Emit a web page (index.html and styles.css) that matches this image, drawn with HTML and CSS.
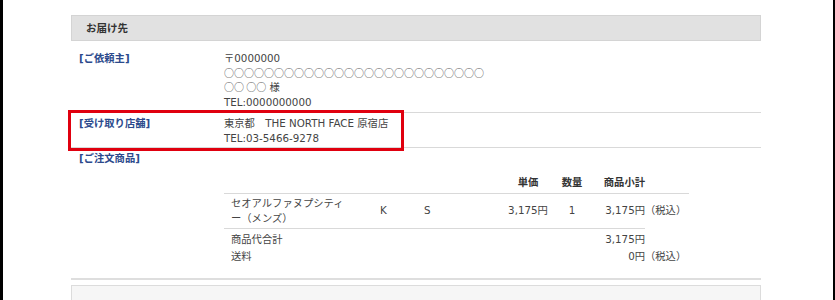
FILE: index.html
```html
<!DOCTYPE html>
<html lang="ja">
<head>
<meta charset="utf-8">
<title>お届け先</title>
<link rel="stylesheet" href="styles.css">
</head>
<body>
<div class="page">
  <div class="content">
    <div class="box-head">お届け先</div>

    <div class="row row-first">
      <div class="label">[ご依頼主]</div>
      <div class="value">
        <div>〒0000000</div>
        <div class="cjk circles">○○○○○○○○○○○○○○○○○○○○○○○○○○</div>
        <div><span class="cjk circles">○○ ○○</span> 様</div>
        <div>TEL:0000000000</div>
      </div>
    </div>

    <div class="row row-line row-shop">
      <div class="label">[受け取り店舗]</div>
      <div class="value">
        <div>東京都　THE NORTH FACE 原宿店</div>
        <div>TEL:03-5466-9278</div>
      </div>
      <div class="highlight"></div>
    </div>

    <div class="row-order row-line">
      <div class="label">[ご注文商品]</div>
      <table class="items">
        <colgroup>
          <col class="c-name"><col class="c-color"><col class="c-size"><col class="c-price"><col class="c-qty"><col class="c-sub"><col class="c-tax">
        </colgroup>
        <thead>
          <tr>
            <th></th><th></th><th></th>
            <th class="center">単価</th>
            <th class="center">数量</th>
            <th class="right">商品小計</th>
            <th></th>
          </tr>
        </thead>
        <tbody>
          <tr class="item">
            <td class="name">セオアルファヌプシティー（メンズ）</td>
            <td class="opt">K</td>
            <td class="opt">S</td>
            <td class="center">3,175円</td>
            <td class="center">1</td>
            <td class="right">3,175円</td>
            <td class="tax">（税込）</td>
          </tr>
          <tr class="sum first">
            <td class="name" colspan="3">商品代合計</td>
            <td colspan="3" class="right">3,175円</td>
            <td class="tax"></td>
          </tr>
          <tr class="sum">
            <td class="name" colspan="3">送料</td>
            <td colspan="3" class="right">0円</td>
            <td class="tax">（税込）</td>
          </tr>
        </tbody>
      </table>
    </div>

    <div class="box-head box-next">お支払い方法</div>
  </div>
</div>
</body>
</html>
```

FILE: styles.css
```css
html, body {
  margin: 0;
  padding: 0;
  background: #fff;
}
body {
  font-family: "DejaVu Sans", "Noto Sans CJK JP", sans-serif;
  font-size: 10.3px;
  line-height: 14.7px;
  color: #444;
}
.page {
  height: 300px;
  overflow: hidden;
  border-left: 3px solid #000;
  border-right: 2px solid #000;
  box-sizing: border-box;
}
.content {
  margin: 15px 0 0 68px;
  width: 690px;
}
.cjk {
  font-family: "Noto Sans CJK JP", sans-serif;
}
.circles {
  color: #555;
  font-size: 10px;
}
.box-head {
  height: 24px;
  line-height: 24px;
  background: #e1e1e1;
  border: 1px solid #d4d4d4;
  padding-left: 14px;
  font-weight: bold;
  color: #333;
  font-size: 10.5px;
}
.row {
  position: relative;
  display: grid;
  grid-template-columns: 153px 1fr;
}
.row-first {
  margin-top: 10px;
  padding: 0 0 2px;
}
.row-line {
  border-top: 1px solid #d9d9d9;
}
.row-shop {
  padding: 3px 0 2px;
}
.label {
  padding-left: 8px;
  font-weight: bold;
  color: #2c4a8c;
}
.highlight {
  position: absolute;
  left: -3px;
  top: -3px;
  width: 330px;
  height: 35px;
  border: 3px solid #e0000f;
}
.row-order {
  padding: 3px 0 14px;
  border-bottom: 2px solid #dedede;
}
.items {
  margin: 5px 0 0 153px;
  width: 465px;
  border-collapse: collapse;
  table-layout: fixed;
}
.c-name { width: 148px; }
.c-color { width: 44px; }
.c-size { width: 80px; }
.c-price { width: 64px; }
.c-qty { width: 24px; }
.c-sub { width: 61px; }
.c-tax { width: 44px; }
.items th {
  font-weight: bold;
  color: #333;
  padding: 4px 0 3px;
  border-bottom: 1px solid #d9d9d9;
  text-align: left;
  white-space: nowrap;
}
.items td {
  padding: 0;
  vertical-align: middle;
  text-align: left;
}
.center { text-align: center !important; }
.right { text-align: right !important; }
.item td {
  padding: 2px 0 2px;
  line-height: 15px;
  border-bottom: 1px solid #d9d9d9;
}
.item td.tax {
  border-bottom: none;
}
.items td.name {
  padding-left: 7px;
  padding-right: 28px;
  line-break: loose;
}
.items td.opt {
  padding-left: 8px;
}
.items td.tax {
  white-space: nowrap;
}
.sum td {
  padding: 2px 0 0;
  line-height: 15px;
}
.sum.first td {
  padding-top: 3px;
}
.box-next {
  margin-top: 5px;
  background: #f6f6f6;
  border-color: #dcdcdc;
  height: 40px;
  line-height: 30px;
  padding-top: 8px;
}
```
